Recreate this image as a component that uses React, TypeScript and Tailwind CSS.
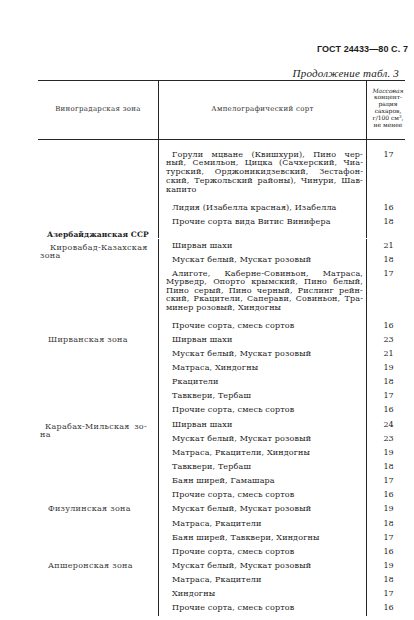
import React from "react";

const body = "font-['DejaVu_Serif','Liberation_Serif',serif]";

function JLine({ text, indent }: { text: string; indent?: boolean }) {
  return (
    <div className={`flex justify-between whitespace-nowrap ${indent ? "pl-[6px]" : ""}`}>
      {text.split(" ").map((w, i) => (
        <span key={i}>{w}</span>
      ))}
    </div>
  );
}

function Cells({
  children,
  v,
  h,
  vpad,
}: {
  children?: React.ReactNode;
  v?: string;
  h: string;
  vpad?: string;
}) {
  return (
    <div className={`grid grid-cols-[208px_39px] ${h}`}>
      <div className={`border-l border-[#262626] ${vpad ?? ""}`}>{children}</div>
      <div className={`border-l border-[#262626] pl-[5px] text-center tracking-normal ${vpad ?? ""}`}>{v}</div>
    </div>
  );
}

function Single({ t, v }: { t: string; v: string }) {
  return (
    <Cells h="h-[14.15px] leading-[14.15px]" v={v}>
      <div className="pl-[13px] whitespace-nowrap">{t}</div>
    </Cells>
  );
}

function Group({ zone, children }: { zone?: React.ReactNode; children: React.ReactNode }) {
  return (
    <div className="grid grid-cols-[120px_247px]">
      <div className="text-[#3a3a3a] tracking-[0.3px]">{zone}</div>
      <div>{children}</div>
    </div>
  );
}

function Zone1({ t }: { t: string }) {
  return <div className="pl-[10px] leading-[14.15px] whitespace-nowrap">{t}</div>;
}

export default function App() {
  return (
    <div className={`w-[414px] h-[620px] overflow-hidden bg-white text-[#1c1c1c] ${body}`}>
      <div className="h-[80px]">
        <div className="pt-[43px] pr-[6px] flex justify-end font-['Liberation_Sans',Arial,sans-serif] font-bold text-[9px] leading-[12px] tracking-[0.1px]">
          ГОСТ 24433—80 С. 7
        </div>
        <div className="mt-[11.5px] pr-[15px] flex justify-end italic font-['Liberation_Serif',serif] text-[11px] leading-[12px] tracking-[0.2px]">
          Продолжение табл. 3
        </div>
      </div>

      <div className="ml-[38px] w-[367px] text-[8px] tracking-[0.15px]">
        {/* header */}
        <div className="grid grid-cols-[120px_208px_39px] h-[60px] border-t-[1.5px] border-b border-[#262626] text-[7px] tracking-[0.3px] text-[#333]">
          <div className="flex items-center justify-center pb-[1px]">Виноградарская зона</div>
          <div className="flex items-center justify-center border-l border-[#262626] pb-[1px]">
            Ампелографический сорт
          </div>
          <div className="flex flex-col items-center justify-center border-l border-[#262626] pl-[4px] pb-[4px] text-[6px] leading-[6.8px] tracking-normal text-center text-[#222]">
            <span className="italic">Массовая</span>
            <span>концент-</span>
            <span>рация</span>
            <span>сахаров,</span>
            <span>
              г/100 см<sup className="text-[4px]">3</sup>,
            </span>
            <span>не менее</span>
          </div>
        </div>

        {/* body */}
        <Group>
          <Cells h="h-[61px] leading-[8.8px]" vpad="pt-[10.5px]" v="17">
            <div className="pl-[7px] pr-[3px]">
              <JLine indent text="Горули мцване (Квишхури), Пино чер-" />
              <JLine text="ный, Семильон, Цицка (Сачхерский, Чиа-" />
              <JLine text="турский, Орджоникидзевский, Зестафон-" />
              <JLine text="ский, Тержольский районы), Чинури, Шав-" />
              <div>капито</div>
            </div>
          </Cells>
          <Single t="Лидия (Изабелла красная), Изабелла" v="16" />
          <Single t="Прочие сорта вида Витис Винифера" v="18" />
        </Group>

        <Group
          zone={
            <div className="pl-[9px] pt-[1px] font-bold text-[7.5px] leading-[9px] whitespace-nowrap tracking-[0.1px] text-[#1c1c1c]">
              Азербайджанская ССР
            </div>
          }
        >
          <Cells h="h-[9px]" />
        </Group>

        <Group
          zone={
            <div className="pt-[4.5px] leading-[8.6px] whitespace-nowrap">
              <div className="pl-[12px]">Кировабад-Казахская</div>
              <div className="pl-[2px]">зона</div>
            </div>
          }
        >
          <Single t="Ширван шахи" v="21" />
          <Single t="Мускат белый, Мускат розовый" v="18" />
          <Cells h="h-[51px] leading-[8.5px]" vpad="pt-[2px]" v="17">
            <div className="pl-[7px] pr-[3px]">
              <JLine indent text="Алиготе, Каберне-Совиньон, Матраса," />
              <JLine text="Мурведр, Опорто крымский, Пино белый," />
              <JLine text="Пино серый, Пино черный, Рислинг рейн-" />
              <JLine text="ский, Ркацители, Саперави, Совиньон, Тра-" />
              <div>минер розовый, Хиндогны</div>
            </div>
          </Cells>
          <Single t="Прочие сорта, смесь сортов" v="16" />
        </Group>

        <Group zone={<Zone1 t="Ширванская зона" />}>
          <Single t="Ширван шахи" v="23" />
          <Single t="Мускат белый, Мускат розовый" v="21" />
          <Single t="Матраса, Хиндогны" v="19" />
          <Single t="Ркацители" v="18" />
          <Single t="Тавквери, Тербаш" v="17" />
          <Single t="Прочие сорта, смесь сортов" v="16" />
        </Group>

        <Group
          zone={
            <div className="pt-[5px] leading-[8.6px] whitespace-nowrap">
              <div className="pl-[7px] pr-[11px] flex justify-between">
                <span>Карабах-Мильская</span>
                <span>зо-</span>
              </div>
              <div className="pl-[2px]">на</div>
            </div>
          }
        >
          <Single t="Ширван шахи" v="24" />
          <Single t="Мускат белый, Мускат розовый" v="23" />
          <Single t="Матраса, Ркацители, Хиндогны" v="19" />
          <Single t="Тавквери, Тербаш" v="18" />
          <Single t="Баян ширей, Гамашара" v="17" />
          <Single t="Прочие сорта, смесь сортов" v="16" />
        </Group>

        <Group zone={<Zone1 t="Физулинская зона" />}>
          <Single t="Мускат белый, Мускат розовый" v="19" />
          <Single t="Матраса, Ркацители" v="18" />
          <Single t="Баян ширей, Тавквери, Хиндогны" v="17" />
          <Single t="Прочие сорта, смесь сортов" v="16" />
        </Group>

        <Group zone={<Zone1 t="Апшеронская зона" />}>
          <Single t="Мускат белый, Мускат розовый" v="19" />
          <Single t="Матраса, Ркацители" v="18" />
          <Single t="Хиндогны" v="17" />
          <Single t="Прочие сорта, смесь сортов" v="16" />
        </Group>
      </div>
    </div>
  );
}
